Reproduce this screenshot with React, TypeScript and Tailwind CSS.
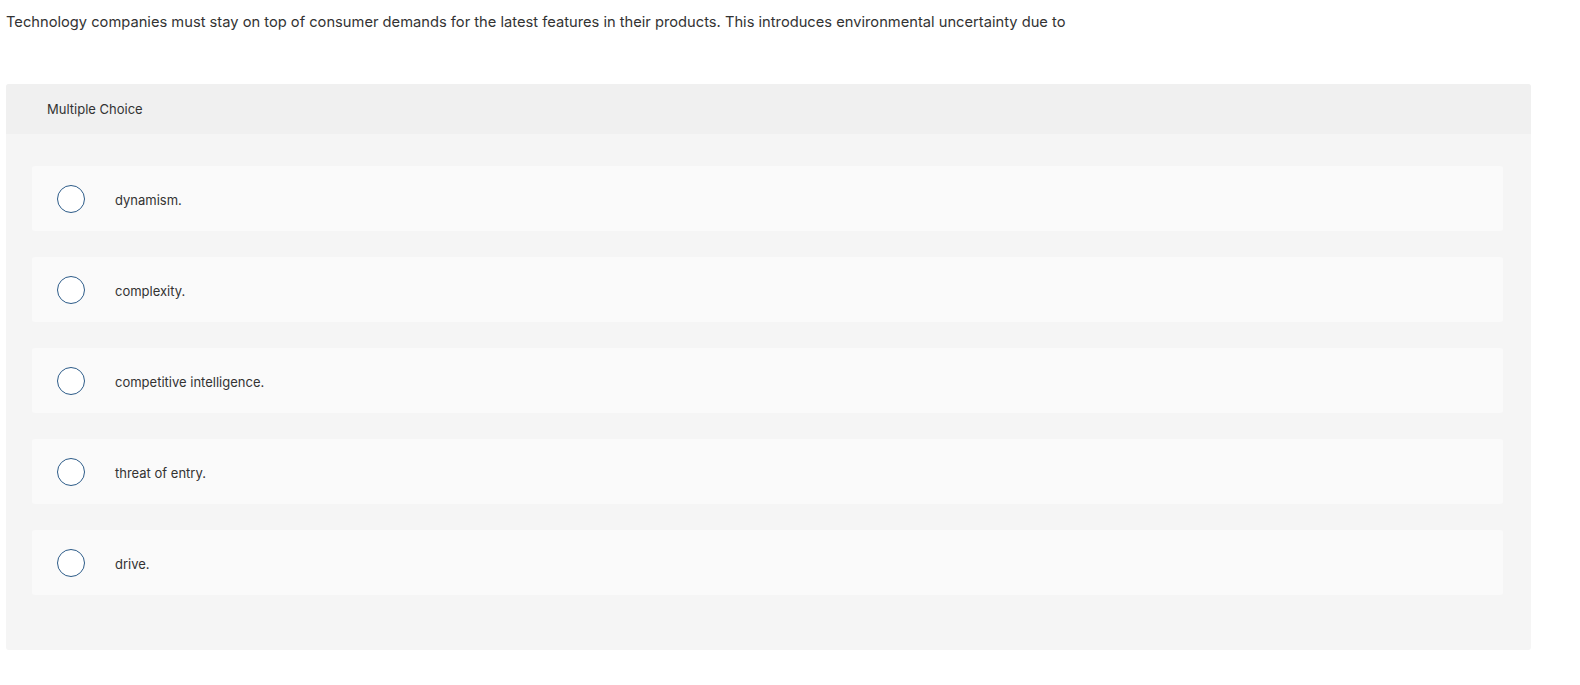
const options = [
  "dynamism.",
  "complexity.",
  "competitive intelligence.",
  "threat of entry.",
  "drive.",
];

export default function App() {
  return (
    <div className="min-h-screen bg-white text-[#333] font-['Inter','Liberation_Sans',sans-serif]">
      <p className="pl-[6px] pt-[13px] text-[14.7px] leading-[18px] text-[#333]">
        Technology companies must stay on top of consumer demands for the latest features in their products. This
        introduces environmental uncertainty due to
      </p>

      <div className="ml-[6px] mt-[53px] w-[1525px] rounded-[3px] bg-[#f5f5f5] overflow-hidden">
        {/* header */}
        <div className="h-[50px] bg-[#f0f0f0] flex items-center pl-[41px] pt-[2px] text-[13px] text-[#333]">
          Multiple Choice
        </div>

        {/* choices */}
        <div className="flex flex-col gap-[26px] pt-[32px] pb-[55px] pl-[26px] pr-[28px]">
          {options.map((opt) => (
            <label
              key={opt}
              className="h-[65px] rounded-[3px] bg-[#fafafa] flex items-center cursor-pointer"
            >
              <span className="ml-[25px] w-[28px] h-[28px] rounded-full border-[1.5px] border-[#2c5b88] bg-white shrink-0" />
              <span className="ml-[30px] pt-[4px] text-[13px] text-[#333]">{opt}</span>
            </label>
          ))}
        </div>
      </div>
    </div>
  );
}
